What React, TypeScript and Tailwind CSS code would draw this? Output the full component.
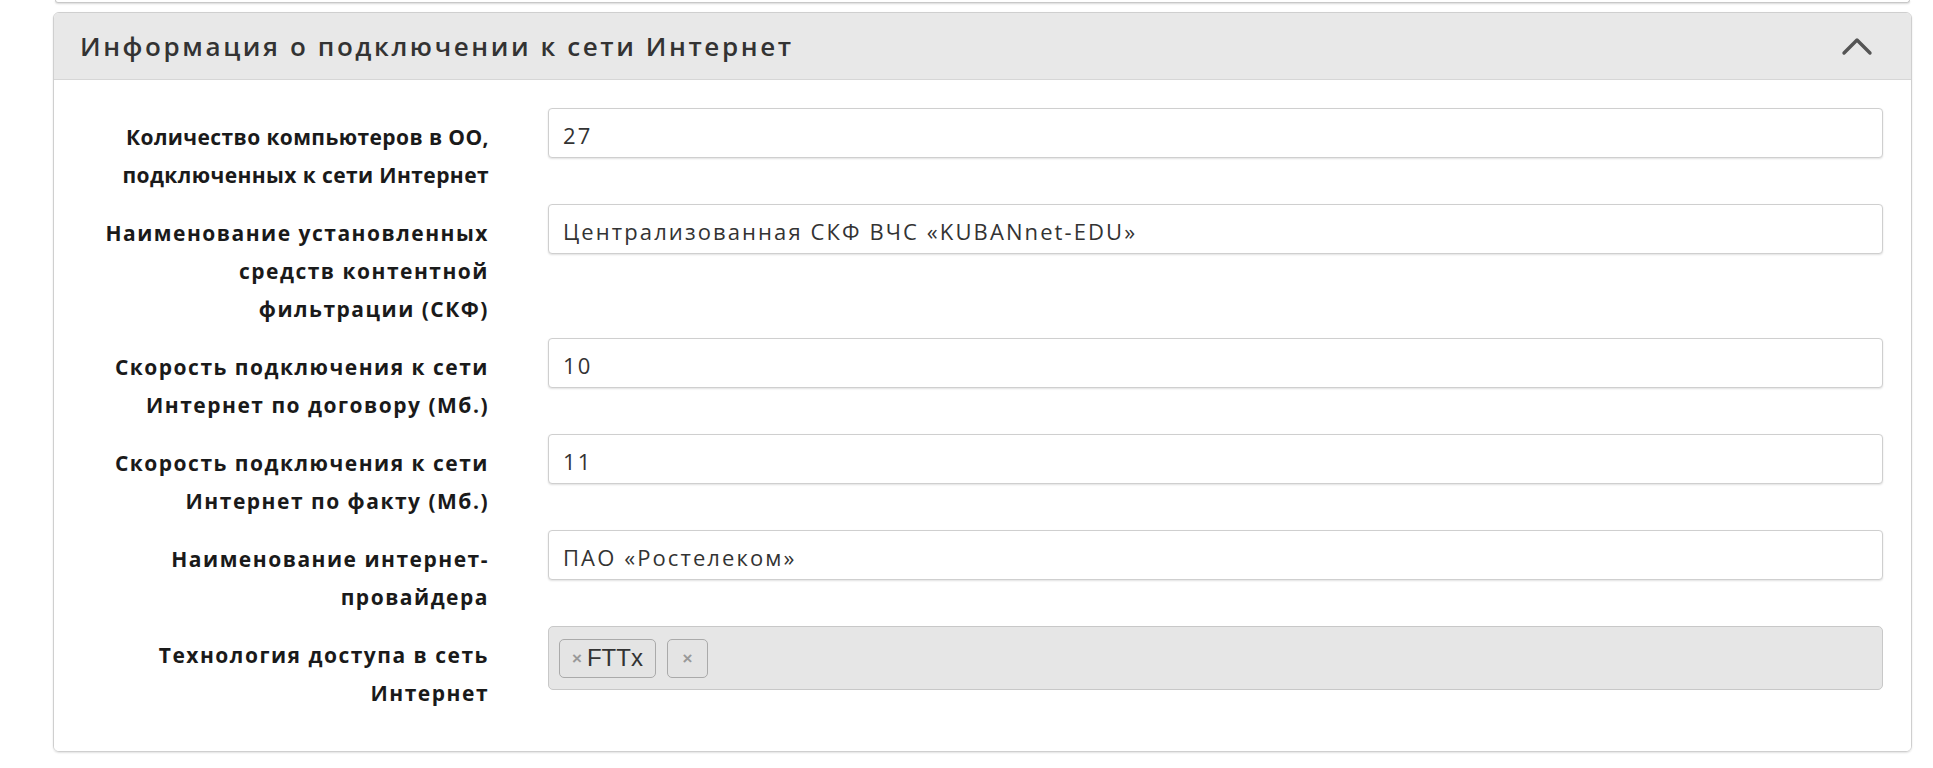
import React from "react";

const rows: { label: string[]; value?: string; tags?: boolean; tight?: boolean }[] = [
  { label: ["Количество компьютеров в ОО,", "подключенных к сети Интернет"], value: "27", tight: true },
  {
    label: ["Наименование установленных", "средств контентной", "фильтрации (СКФ)"],
    value: "Централизованная СКФ ВЧС «KUBANnet-EDU»",
  },
  { label: ["Скорость подключения к сети", "Интернет по договору (Мб.)"], value: "10" },
  { label: ["Скорость подключения к сети", "Интернет по факту (Мб.)"], value: "11" },
  { label: ["Наименование интернет-", "провайдера"], value: "ПАО «Ростелеком»" },
  { label: ["Технология доступа в сеть", "Интернет"], tags: true },
];

export default function App() {
  return (
    <div className="min-h-[768px] bg-white pl-[53px] pr-[21px]" style={{ fontFamily: '"Open Sans", sans-serif' }}>
      <div className="mx-[2px] h-[3px] rounded-b-[4px] border-x border-b border-[#c8c8c8] shadow-[0_1px_2px_rgba(0,0,0,0.15)]" />
      <div className="mt-[9px] overflow-hidden rounded-[6px] border border-[#cfcfcf] shadow-[0_1px_2px_rgba(0,0,0,0.12)]">
        <div className="flex h-[67px] items-center justify-between border-b border-[#d6d6d6] bg-[#e8e8e8] pl-[26px] pr-[38px]">
          <span className="text-[26px] font-semibold tracking-[2.6px] text-[#333]">
            Информация о подключении к сети Интернет
          </span>
          <svg width="32" height="20" viewBox="0 0 32 20" fill="none">
            <path d="M3 17 L16 4 L29 17" stroke="#555" strokeWidth="3.4" strokeLinecap="round" strokeLinejoin="round" />
          </svg>
        </div>
        <div className="flex flex-col gap-[10px] bg-white pb-[39px] pr-[28px] pt-[28px]">
          {rows.map((r, i) => (
            <div key={i} className="flex items-start">
              <div
                className={
                  r.tight
                    ? "w-[435px] shrink-0 pt-[10px] text-right text-[21px] font-bold leading-[38px] tracking-[0.4px] text-[#1a1a1a]"
                    : "w-[435px] shrink-0 pt-[10px] text-right text-[21px] font-bold leading-[38px] tracking-[1.5px] text-[#1a1a1a]"
                }
              >
                {r.label.map((l, j) => (
                  <div key={j}>{l}</div>
                ))}
              </div>
              <div className="ml-[59px] flex-1">
                {r.tags ? (
                  <div className="flex h-[64px] items-center gap-[11px] rounded-[5px] border border-[#c8c8c8] bg-[#e6e6e6] pl-[10px]">
                    <div
                      className="flex h-[39px] items-center rounded-[5px] border border-[#aaa] bg-[#e4e4e4] pl-[12px] pr-[12px]"
                      style={{ fontFamily: '"Liberation Sans", Arial, sans-serif' }}
                    >
                      <span className="mr-[5px] text-[17px] font-bold leading-none text-[#999]">×</span>
                      <span className="text-[24px] leading-none text-[#333]">FTTx</span>
                    </div>
                    <div
                      className="flex h-[39px] w-[41px] items-center justify-center rounded-[5px] border border-[#aaa] bg-[#e4e4e4]"
                      style={{ fontFamily: '"Liberation Sans", Arial, sans-serif' }}
                    >
                      <span className="text-[17px] font-bold leading-none text-[#999]">×</span>
                    </div>
                  </div>
                ) : (
                  <div className="flex h-[50px] items-center rounded-[4px] border border-[#cfcfcf] bg-white pl-[14px] pt-[4px] text-[22px] tracking-[2.1px] text-[#333] shadow-[0_1px_2px_rgba(0,0,0,0.12)]">
                    {r.value}
                  </div>
                )}
              </div>
            </div>
          ))}
        </div>
      </div>
    </div>
  );
}
